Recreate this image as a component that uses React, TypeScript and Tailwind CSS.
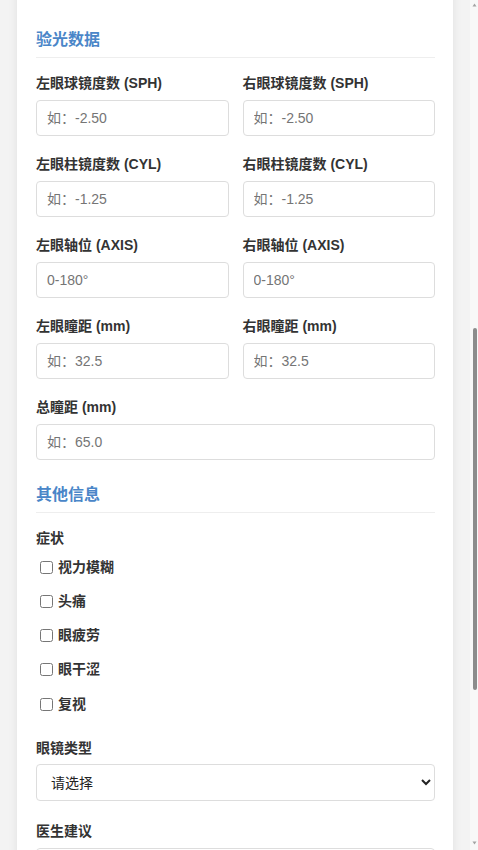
import { useLayoutEffect, useRef } from "react";
import type { ReactNode, Ref } from "react";

const inputClass =
  "block h-[36px] w-full rounded-[4px] border border-[#ddd] bg-white px-[10px] text-[14px] text-[#333] outline-none placeholder:text-[#757575]";
const labelClass = "mb-[7px] block text-[14px] font-bold leading-[20px] text-[#333]";

function SectionTitle({ children, headingRef }: { children: ReactNode; headingRef?: Ref<HTMLHeadingElement> }) {
  return (
    <h3
      ref={headingRef}
      className="mt-[23px] mb-[15px] border-b border-[#eee] pb-[5px] text-[16px] font-bold leading-[24px] text-[#4a86c8]"
    >
      {children}
    </h3>
  );
}

function Field({ label, placeholder }: { label: string; placeholder: string }) {
  return (
    <div className="mb-[18px]">
      <label className={labelClass}>{label}</label>
      <input type="text" className={inputClass} placeholder={placeholder} />
    </div>
  );
}

function TextArea({ label, placeholder, height }: { label: string; placeholder: string; height: string }) {
  return (
    <div className="mb-[18px]">
      <label className={labelClass}>{label}</label>
      <textarea
        className={`block w-full resize-none rounded-[4px] border border-[#ddd] bg-white px-[10px] py-[8px] text-[14px] text-[#333] outline-none placeholder:text-[#757575] ${height}`}
        placeholder={placeholder}
      />
    </div>
  );
}

function SelectField({ label, options }: { label: string; options: string[] }) {
  return (
    <div className="mb-[20px]">
      <label className="mb-[6px] block text-[14px] font-bold leading-[20px] text-[#333]">{label}</label>
      <select className="block h-[37px] w-full rounded-[4px] border border-[#ddd] bg-white pl-[10px] pr-[3px] text-[14px] text-[#222] outline-none">
        <option value="">请选择</option>
        {options.map((o) => (
          <option key={o}>{o}</option>
        ))}
      </select>
    </div>
  );
}

const symptoms = ["视力模糊", "头痛", "眼疲劳", "眼干涩", "复视"];

function ScrollTrack() {
  return (
    <div className="flex h-screen w-[8px] shrink-0 flex-col items-center bg-[#f8f8f8]">
      <svg width="5" height="4" viewBox="0 0 5 4" className="mt-[3px]">
        <path d="M2.5 0.5 L4.5 3.5 L0.5 3.5 Z" fill="#a3a3a3" />
      </svg>
      <div className="mt-[321px] ml-[1px] h-[362px] w-[4px] rounded-full bg-[#8c8c8c]" />
      <div className="flex-1" />
      <svg width="5" height="4" viewBox="0 0 5 4" className="mb-[5px]">
        <path d="M0.5 0.5 L4.5 0.5 L2.5 3.5 Z" fill="#a3a3a3" />
      </svg>
    </div>
  );
}

export default function App() {
  const scrollRef = useRef<HTMLDivElement>(null);
  const anchorRef = useRef<HTMLHeadingElement>(null);

  // open the page scrolled down to the refraction section
  useLayoutEffect(() => {
    const box = scrollRef.current;
    const anchor = anchorRef.current;
    if (!box || !anchor) return;
    const offset = anchor.getBoundingClientRect().top - box.getBoundingClientRect().top + box.scrollTop;
    box.scrollTop = offset - 28;
  }, []);

  return (
    <div className="flex h-screen bg-[#f3f3f3] font-['Liberation_Sans','Noto_Sans_CJK_SC',sans-serif]">
      <div
        ref={scrollRef}
        className="h-screen min-w-0 flex-1 overflow-y-scroll [scrollbar-width:none] [&::-webkit-scrollbar]:hidden"
      >
        <div className="px-[17px] py-[17px]">
          <div className="rounded-[6px] bg-white pt-[19px] pb-[19px] pl-[19px] pr-[18px] shadow-[0_0_10px_rgba(0,0,0,0.08)]">
            <h1 className="text-center text-[22px] font-bold leading-[30px] text-[#333]">验光检查记录</h1>

            <SectionTitle>基本信息</SectionTitle>
            <div className="grid grid-cols-2 gap-x-[14px]">
              <Field label="姓名" placeholder="请输入姓名" />
              <Field label="性别" placeholder="男 / 女" />
              <Field label="年龄" placeholder="如：28" />
              <Field label="联系电话" placeholder="请输入手机号" />
              <Field label="检查日期" placeholder="年/月/日" />
              <Field label="验光师" placeholder="请输入姓名" />
            </div>
            <Field label="联系地址" placeholder="请输入地址" />
            <TextArea label="主诉" placeholder="请描述主要不适..." height="h-[80px]" />
            <TextArea label="既往病史" placeholder="如有请填写" height="h-[80px]" />
            <SelectField label="既往配镜情况" options={["从未配镜", "框架眼镜", "隐形眼镜"]} />

            <div className="pt-[10px]">
              <SectionTitle headingRef={anchorRef}>验光数据</SectionTitle>
              <div className="grid grid-cols-2 gap-x-[14px]">
                <Field label="左眼球镜度数 (SPH)" placeholder="如：-2.50" />
                <Field label="右眼球镜度数 (SPH)" placeholder="如：-2.50" />
                <Field label="左眼柱镜度数 (CYL)" placeholder="如：-1.25" />
                <Field label="右眼柱镜度数 (CYL)" placeholder="如：-1.25" />
                <Field label="左眼轴位 (AXIS)" placeholder="0-180°" />
                <Field label="右眼轴位 (AXIS)" placeholder="0-180°" />
                <Field label="左眼瞳距 (mm)" placeholder="如：32.5" />
                <Field label="右眼瞳距 (mm)" placeholder="如：32.5" />
              </div>
              <Field label="总瞳距 (mm)" placeholder="如：65.0" />
            </div>

            <SectionTitle>其他信息</SectionTitle>
            <div className="mb-[20px]">
              <label className="mb-[5px] block text-[14px] font-bold leading-[20px] text-[#333]">症状</label>
              <div className="flex flex-col gap-[6.25px]">
                {symptoms.map((s) => (
                  <label key={s} className="flex h-[28px] items-center text-[14px] font-bold text-[#333]">
                    <input type="checkbox" className="ml-[4px] mr-[5px] h-[13px] w-[13px]" />
                    {s}
                  </label>
                ))}
              </div>
            </div>
            <SelectField label="眼镜类型" options={["单光镜", "渐进镜", "防蓝光镜", "隐形眼镜"]} />
            <TextArea label="医生建议" placeholder="请输入医生建议..." height="h-[100px]" />
            <Field label="复查日期" placeholder="年/月/日" />
            <Field label="备注" placeholder="其他说明" />

            <button className="mt-[19px] block h-[44px] w-full rounded-[4px] bg-[#4a86c8] text-[16px] font-bold text-white">
              保存记录
            </button>
          </div>
        </div>
      </div>
      <ScrollTrack />
    </div>
  );
}
